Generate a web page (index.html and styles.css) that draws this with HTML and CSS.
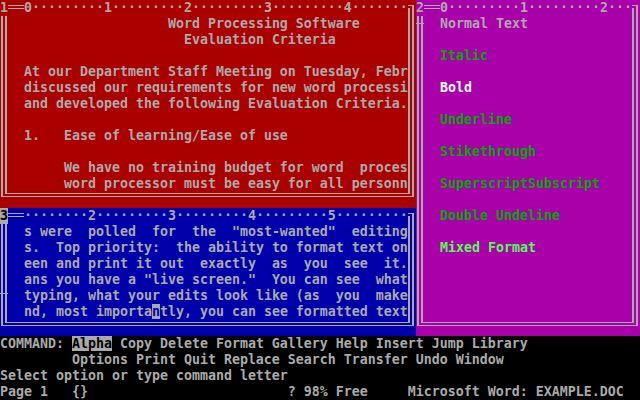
FILE: index.html
```html
<!DOCTYPE html>
<html>
<head>
<meta charset="utf-8">
<link rel="stylesheet" href="styles.css">
</head>
<body>
<div class="screen">
  <div class="desk">
    <div class="stack">
      <section class="win red">
        <div class="ruler"><span class="num">1</span><span class="dbl"></span><span class="marks">0·········1·········2·········3·········4·······</span><span class="corner"><span class="co"><span class="ci"></span></span></span></div>
        <div class="wbody">
          <div class="vl"><div class="lines"></div></div>
<pre class="txt">                  Word Processing Software
                    Evaluation Criteria

At our Department Staff Meeting on Tuesday, Febr
discussed our requirements for new word processi
and developed the following Evaluation Criteria.

1.   Ease of learning/Ease of use

     We have no training budget for word  proces
     word processor must be easy for all personn</pre>
          <div class="vr"><div class="lines"></div></div>
        </div>
        <div class="wbot"><div class="bo short"><div class="bi short"></div></div></div>
      </section>
      <section class="win blue">
        <div class="ruler"><span class="num active">3</span><span class="dbl"></span><span class="marks">········2·········3·········4·········5·········</span><span class="corner"><span class="co"><span class="ci"></span></span></span></div>
        <div class="wbody">
          <div class="vl"><div class="lines"><div class="tick tick-blue"></div></div></div>
<pre class="txt">s were  polled  for  the  "most-wanted"  editing
s.  Top priority:  the ability to format text on
een and print it out  exactly  as  you  see  it.
ans you have a "live screen."  You can see  what
typing, what your edits look like (as  you  make
nd, most importa<span class="cur">n</span>tly, you can see formatted text</pre>
          <div class="vr"><div class="lines"></div></div>
        </div>
        <div class="wbot"><div class="bo"><div class="bi"></div></div></div>
      </section>
    </div>
    <section class="win mag">
      <div class="ruler"><span class="num">2</span><span class="dbl"></span><span class="marks">0·········1·········2···</span><span class="corner"><span class="co"><span class="ci"></span></span></span></div>
      <div class="wbody">
        <div class="vl"><div class="lines"><div class="tick tick-mag"></div></div></div>
<pre class="txt"><span class="c-normal">Normal Text</span>

<span class="c-green">Italic</span>

<span class="c-white">Bold</span>

<span class="c-green">Underline</span>

<span class="c-green">Stikethrough</span>

<span class="c-green">SuperscriptSubscript</span>

<span class="c-green">Double Undeline</span>

<span class="c-lime">Mixed Format</span></pre>
        <div class="vr"><div class="lines"></div></div>
      </div>
      <div class="wbot"><div class="bo"><div class="bi"></div></div></div>
    </section>
  </div>
  <div class="cmd">
    <div class="line">COMMAND: <span class="hl">Alpha</span> Copy Delete Format Gallery Help Insert Jump Library</div>
    <div class="line">         Options Print Quit Replace Search Transfer Undo Window</div>
    <div class="line">Select option or type command letter</div>
    <div class="line">Page 1   {}                         ? 98% Free     Microsoft Word: EXAMPLE.DOC</div>
  </div>
</div>
</body>
</html>
```
FILE: styles.css
```css
html, body {
  margin: 0;
  padding: 0;
  background: #000;
}
body {
  width: 640px;
  height: 400px;
  overflow: hidden;
  font-family: "DejaVu Sans Mono", "Liberation Mono", monospace;
  font-weight: bold;
  font-size: 13.29px;
  line-height: 16px;
  color: #aaaaaa;
}
.screen {
  display: grid;
  grid-template-rows: 336px 64px;
  width: 640px;
  height: 400px;
}
.desk {
  display: grid;
  grid-template-columns: 416px 224px;
  min-height: 0;
}
.stack {
  display: grid;
  grid-template-rows: 208px 128px;
  min-height: 0;
}
.win {
  display: grid;
  grid-template-rows: 16px 1fr 16px;
  min-height: 0;
  overflow: hidden;
}
.red { background: #aa0000; }
.blue { background: #0000aa; }
.mag { background: #aa00aa; }

.ruler {
  display: flex;
  white-space: pre;
  height: 16px;
}
.num {
  width: 8px;
  flex: none;
}
.num.active {
  background: #aaaaaa;
  color: #000;
}
.dbl {
  flex: none;
  width: 16px;
  height: 2px;
  margin-top: 5px;
  border-top: 1px solid #aaaaaa;
  border-bottom: 1px solid #aaaaaa;
}
.marks {
  flex: 1;
  overflow: hidden;
}
.corner {
  flex: none;
  width: 8px;
  height: 16px;
}
.co {
  display: block;
  margin-top: 5px;
  width: 4px;
  height: 10px;
  border-top: 1px solid #aaaaaa;
  border-right: 2px solid #aaaaaa;
}
.ci {
  display: block;
  margin-top: 2px;
  width: 0;
  height: 7px;
  border-top: 1px solid #aaaaaa;
  border-right: 2px solid #aaaaaa;
}

.wbody {
  display: grid;
  grid-template-columns: 8px 1fr 8px;
  min-height: 0;
  overflow: hidden;
}
.vl, .vr {
  display: flex;
}
.lines {
  width: 2px;
  border-left: 2px solid #aaaaaa;
  border-right: 2px solid #aaaaaa;
}
.vl .lines { margin-left: 1px; }
.vr .lines { margin-left: 0; }
.tick {
  width: 8px;
  height: 1px;
  margin-left: -3px;
  background: #aaaaaa;
}
.tick-blue { margin-top: 69px; }
.tick-mag { margin-top: 7px; }

.txt {
  margin: 0;
  padding-left: 16px;
  font: inherit;
  white-space: pre;
  overflow: hidden;
}
.cur {
  background: #aaaaaa;
  color: #0000aa;
}
.c-normal { color: #aaaaaa; }
.c-green { color: #00aa00; }
.c-white { color: #ffffff; }
.c-lime { color: #55ff55; }

.wbot {
  height: 16px;
}
.bo {
  margin: 0 2px 0 1px;
  height: 5px;
  border: 2px solid #aaaaaa;
  border-top: 0;
  border-bottom-width: 1px;
}
.bi {
  margin: 0 2px;
  height: 2px;
  border: 2px solid #aaaaaa;
  border-top: 0;
  border-bottom-width: 1px;
}
.bo.short { height: 4px; }
.bi.short { height: 1px; }

.cmd {
  background: #000;
  overflow: hidden;
}
.line {
  height: 16px;
  white-space: pre;
}
.hl {
  background: #aaaaaa;
  color: #000;
}
```
